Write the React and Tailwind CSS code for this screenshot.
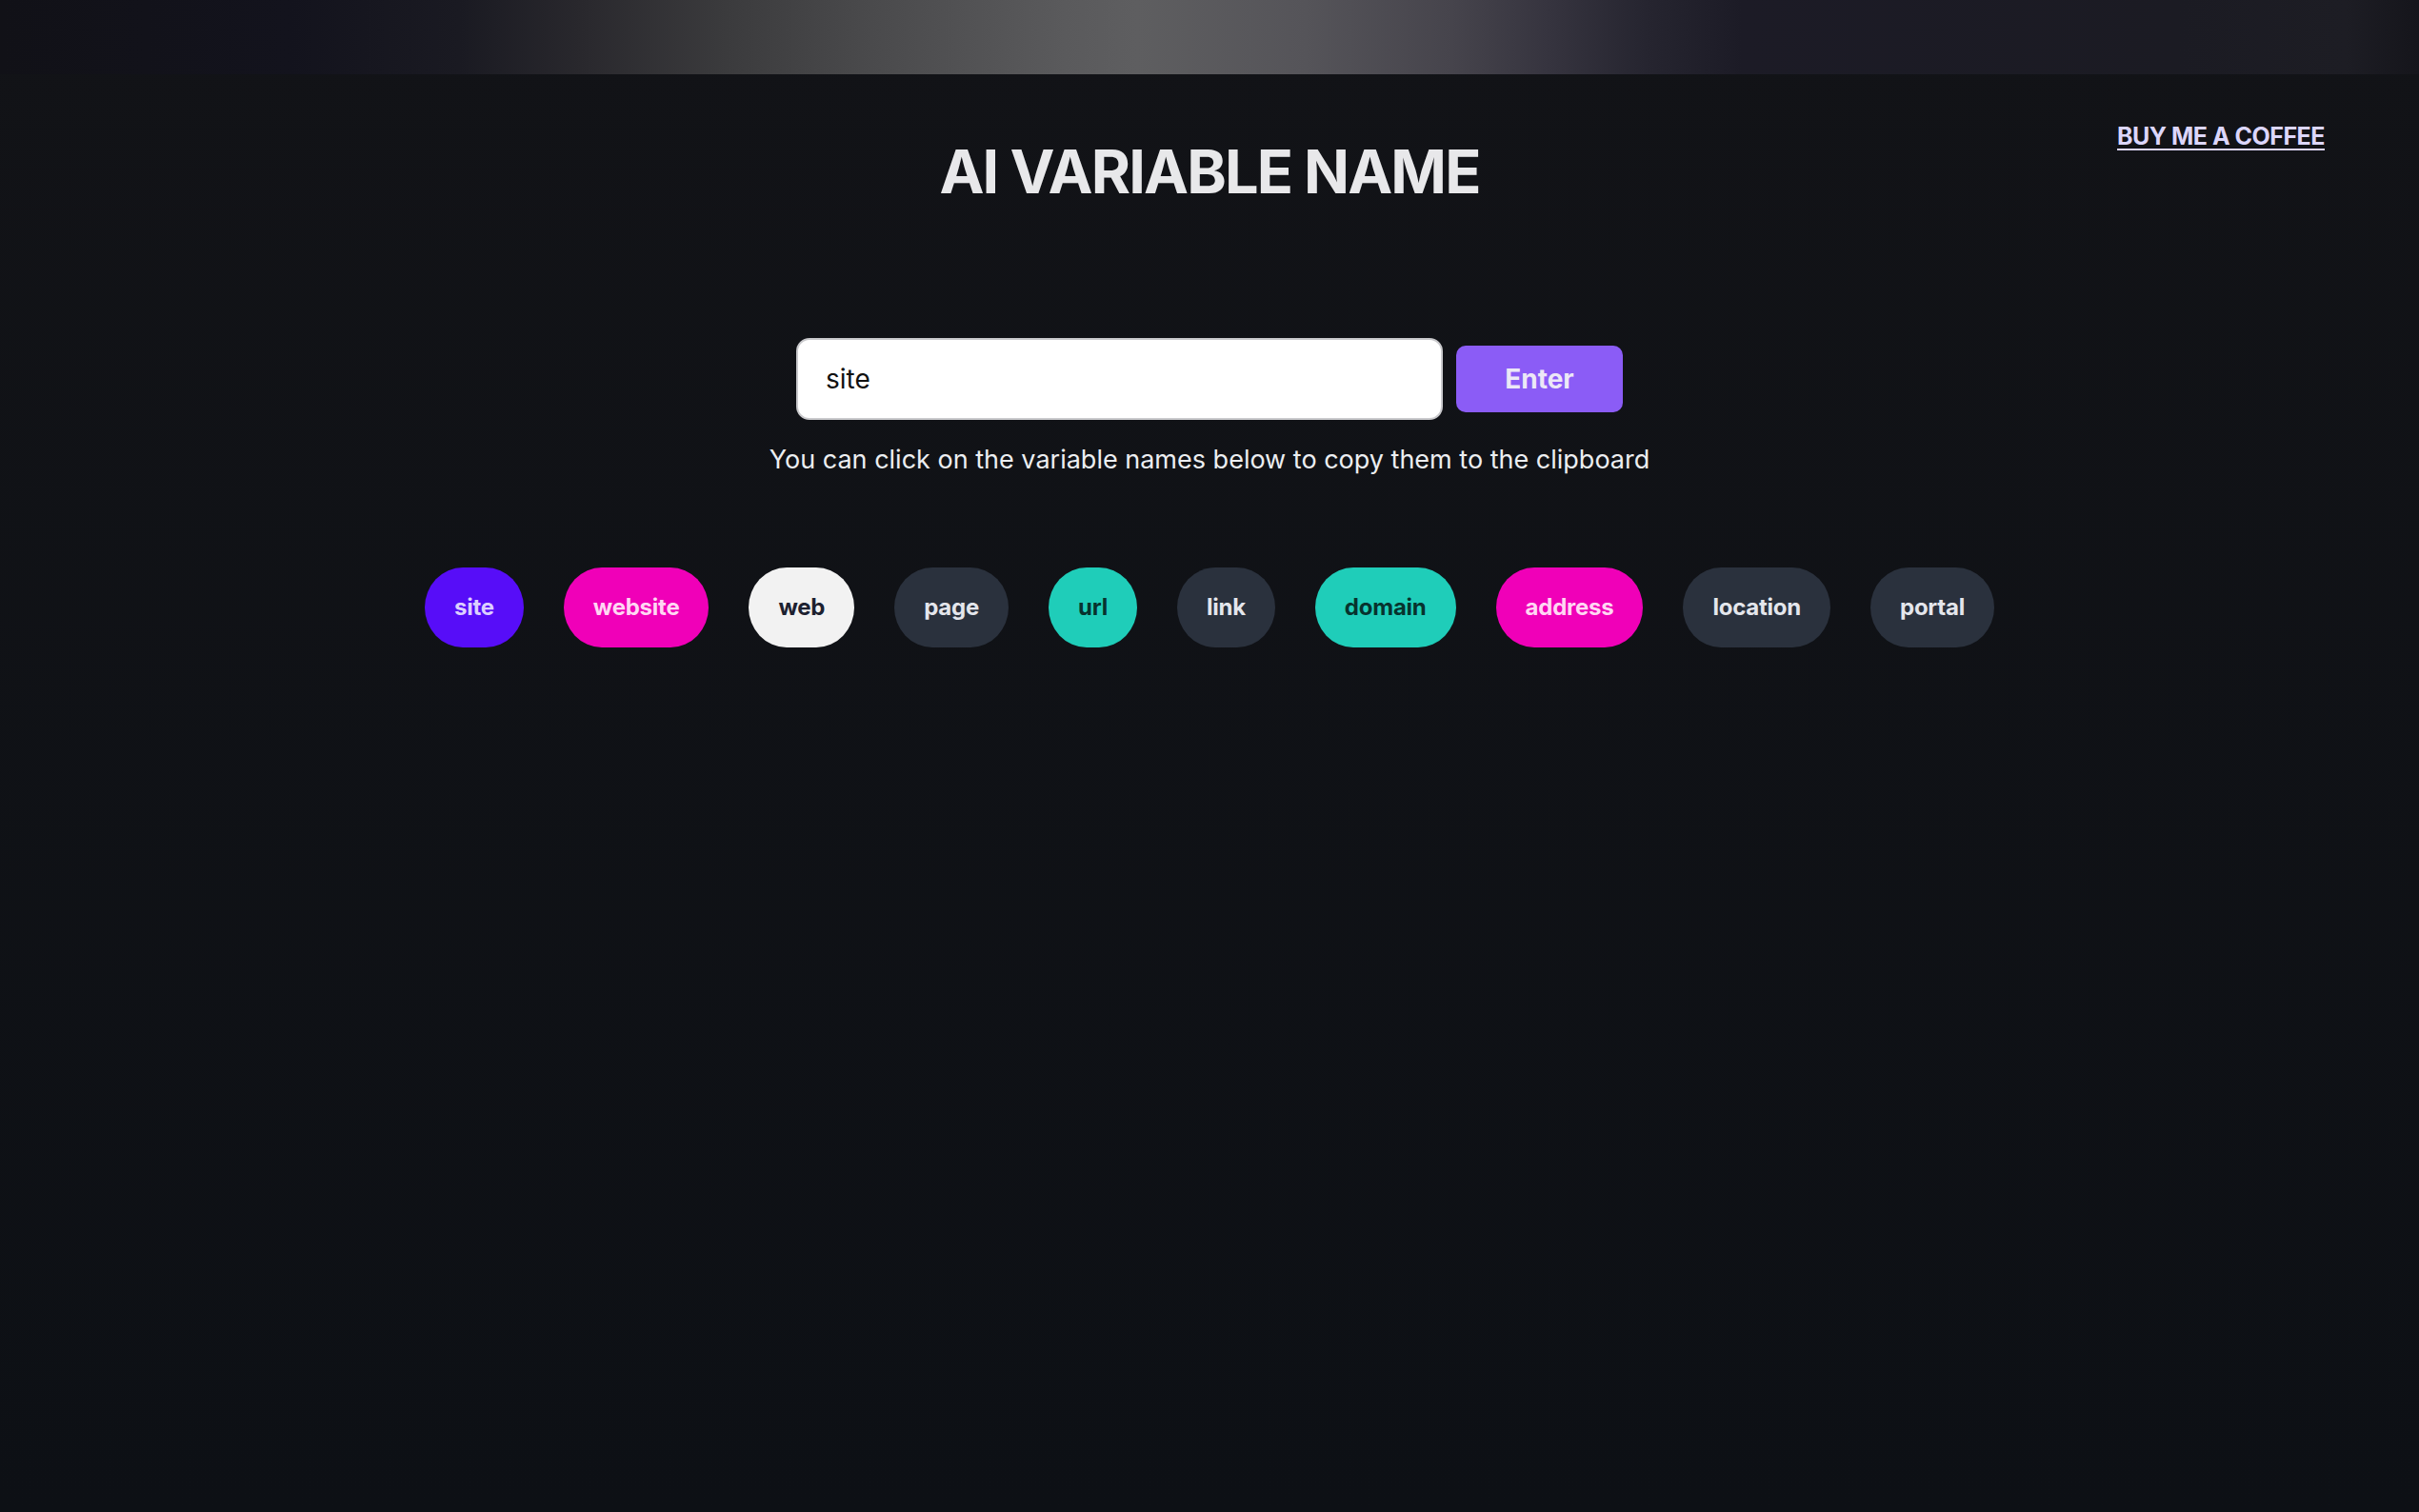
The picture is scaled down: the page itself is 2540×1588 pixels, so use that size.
import { useState } from 'react';

const names = [
  { label: 'site', tone: 'primary' },
  { label: 'website', tone: 'secondary' },
  { label: 'web', tone: 'light' },
  { label: 'page', tone: 'neutral' },
  { label: 'url', tone: 'accent' },
  { label: 'link', tone: 'neutral' },
  { label: 'domain', tone: 'accent' },
  { label: 'address', tone: 'secondary' },
  { label: 'location', tone: 'neutral' },
  { label: 'portal', tone: 'neutral' },
];

const tones = {
  primary: 'bg-[#570df8] text-[#dccfff]',
  secondary: 'bg-[#f000b8] text-[#ffd7f3]',
  light: 'bg-[#f2f2f2] text-[#1d2130]',
  neutral: 'bg-[#2a313d] text-[#e4e6ec]',
  accent: 'bg-[#1fcdb9] text-[#07332e]',
};

const Chip = ({ label, tone }) => (
  <button
    onClick={() => navigator.clipboard?.writeText(label)}
    className={`h-[84px] px-[31px] [border-radius:40px/42px] text-[24px] font-bold tracking-[-0.01em] ${tones[tone]}`}
  >
    {label}
  </button>
);

const App = () => {
  const [value, setValue] = useState('site');

  return (
    <div className="min-h-screen bg-gradient-to-b from-[#121317] to-[#0d1015] font-['Inter',sans-serif] text-[#e5e7eb]">
      {/* top glow bar */}
      <div className="h-[78px] bg-[linear-gradient(to_right,#111117_0%,#13131d_12%,#1a1a22_19%,#29282d_24%,#3b3b3d_30%,#4a4a4c_36%,#5a5a5c_44%,#5e5e60_47%,#555459_54%,#46444c_60%,#36343f_64%,#262530_68%,#1c1b26_72%,#1b1b23_90%,#1d1d24_97%,#15151b_100%)]" />

      {/* header */}
      <div className="grid grid-cols-[1fr_auto_1fr] items-start pt-[65px]">
        <div />
        <h1 className="text-[63px] leading-[1.2] font-bold tracking-[-0.03em] text-[#e8e8ea]">
          AI VARIABLE NAME
        </h1>
        <div className="flex justify-end pr-[99px] -mt-[12px]">
          <a
            href="#"
            className="text-[25px] leading-none font-bold tracking-[-0.02em] text-[#dcd6fb] underline underline-offset-[4px] decoration-2"
          >
            BUY ME A COFFEE
          </a>
        </div>
      </div>

      {/* search */}
      <div className="flex flex-col items-center mt-[136px]">
        <div className="flex items-center gap-[14px]">
          <input
            value={value}
            onChange={(e) => setValue(e.target.value)}
            className="w-[679px] h-[86px] rounded-[14px] bg-white border-2 border-[#c9c9cc] px-[29px] text-[28px] text-[#111] outline-none"
          />
          <button className="w-[175px] h-[70px] rounded-[10px] bg-[#8b5cf6] text-[28px] font-bold text-[#ece8f6]">
            Enter
          </button>
        </div>
        <p className="mt-[22px] text-[27px] text-[#eceef1]">
          You can click on the variable names below to copy them to the clipboard
        </p>
      </div>

      {/* results */}
      <div className="flex justify-center gap-[42px] mt-[93px]">
        {names.map((n) => (
          <Chip key={n.label} {...n} />
        ))}
      </div>
    </div>
  );
};

export default App;
